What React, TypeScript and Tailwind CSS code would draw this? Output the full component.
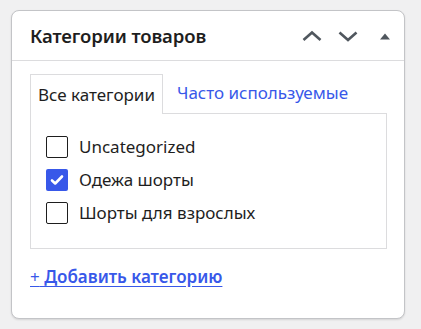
const App: React.FC = () => {
  const items = [
    { label: "Uncategorized", checked: false },
    { label: "Одежа шорты", checked: true },
    { label: "Шорты для взрослых", checked: false },
  ];

  return (
    <div className="min-h-screen w-[421px] h-[329px] bg-[#f0f0f1] pt-[10px] pl-[11px] font-['Noto_Sans',sans-serif] text-[#1e1e1e]">
      <div className="w-[394px] h-[309px] bg-white border border-[#c3c4c7] rounded-[8px] shadow-[0_1px_2px_rgba(0,0,0,0.12)]">
        <div className="h-[50px] border-b border-[#dcdcde] flex items-center pl-[18px] pr-[13px]">
          <h2 className="text-[18.5px] font-semibold flex-1 tracking-[-0.1px]">Категории товаров</h2>
          <div className="flex items-center text-[#50575e]">
            <svg width="20" height="20" viewBox="0 0 20 20" fill="none" stroke="currentColor" strokeWidth="2.6">
              <path d="M1.5 14L10 6.5 18.5 14" />
            </svg>
            <svg width="20" height="20" viewBox="0 0 20 20" fill="none" stroke="currentColor" strokeWidth="2.6" className="ml-[16px]">
              <path d="M1.5 6.5L10 14l8.5-7.5" />
            </svg>
            <svg width="12" height="12" viewBox="0 0 12 12" className="ml-[21px]">
              <path d="M1 9.5L6 3.5l5 6z" fill="currentColor" />
            </svg>
          </div>
        </div>

        <div className="px-[18px] pt-[12px]">
          <div className="flex">
            <div className="h-[40px] px-[7px] flex items-center border border-b-0 border-[#dcdcde] bg-white text-[17px] relative top-[1px]">
              Все категории
            </div>
            <div className="h-[39px] pl-[14px] flex items-center text-[17px] text-[#3858e9]">
              Часто используемые
            </div>
          </div>
          <div className="w-[357px] h-[136px] border border-[#dcdcde] pt-[22px] pl-[15px] flex flex-col gap-[11px]">
            {items.map((it) => (
              <label key={it.label} className="flex items-center gap-[11px] text-[17px] leading-[22px] text-[#1e1e1e]">
                {it.checked ? (
                  <span className="w-[22px] h-[22px] rounded-[2px] bg-[#3858e9] flex items-center justify-center">
                    <svg width="16" height="16" viewBox="0 0 16 16" fill="none" stroke="white" strokeWidth="2.6" strokeLinecap="round" strokeLinejoin="round">
                      <path d="M3 8.5l3.2 3L13 4.5" />
                    </svg>
                  </span>
                ) : (
                  <span className="w-[22px] h-[22px] rounded-[2px] border border-[#1e1e1e] bg-white" />
                )}
                {it.label}
              </label>
            ))}
          </div>
          <a href="#" className="block mt-[15px] text-[17px] font-semibold text-[#3858e9] underline underline-offset-[3px]">
            <span className="font-normal">+</span> Добавить категорию
          </a>
        </div>
      </div>
    </div>
  );
};

export default App;
